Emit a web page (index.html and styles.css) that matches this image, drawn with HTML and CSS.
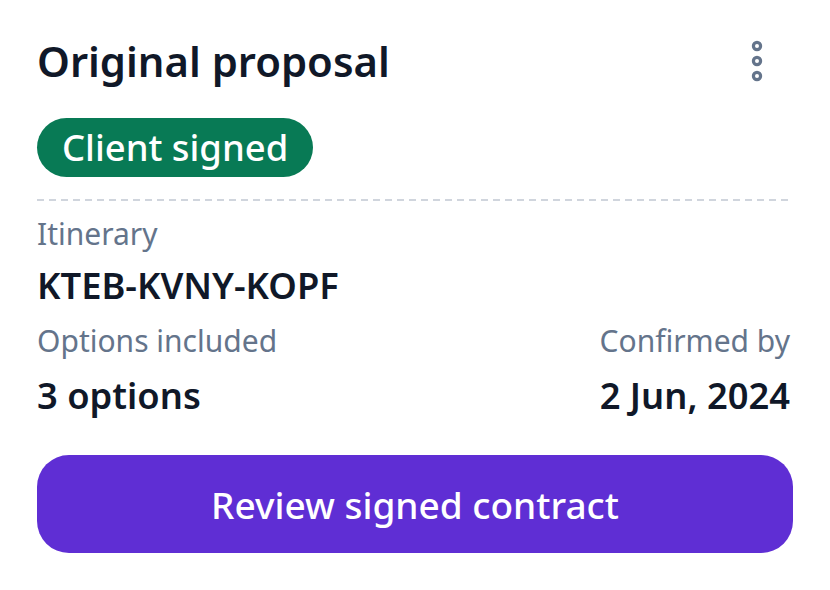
FILE: index.html
```html
<!DOCTYPE html>
<html lang="en">
<head>
    <meta charset="UTF-8">
    <title>Original proposal</title>
    <link rel="stylesheet" href="styles.css">
</head>
<body>
<div class="card">
    <div class="card-head">
        <h2 class="title">Original proposal</h2>
        <span class="more">
            <svg width="14" height="42" viewBox="0 0 14 42">
                <circle cx="7" cy="6" r="3.6" fill="#fff" stroke="#64748b" stroke-width="3.2"/>
                <circle cx="7" cy="21" r="3.6" fill="#fff" stroke="#64748b" stroke-width="3.2"/>
                <circle cx="7" cy="36" r="3.6" fill="#fff" stroke="#64748b" stroke-width="3.2"/>
            </svg>
        </span>
    </div>
    <span class="badge">Client signed</span>
    <div class="divider"></div>
    <p class="label">Itinerary</p>
    <p class="value">KTEB-KVNY-KOPF</p>
    <div class="row">
        <div>
            <p class="label">Options included</p>
            <p class="value">3 options</p>
        </div>
        <div class="right">
            <p class="label">Confirmed by</p>
            <p class="value">2 Jun, 2024</p>
        </div>
    </div>
    <button class="btn">Review signed contract</button>
</div>
</body>
</html>
```

FILE: styles.css
```css
* {
    padding: 0;
    margin: 0;
    box-sizing: border-box;
}

body {
    background: #fff;
    font-family: "Noto Sans", "Open Sans", sans-serif;
    color: #101828;
}

.card {
    padding: 30px 37px 0 37px;
}

.card-head {
    display: flex;
    justify-content: space-between;
    align-items: center;
}

.title {
    font-size: 41.8px;
    font-weight: 560;
    line-height: 62px;
}

.more {
    display: flex;
    margin-right: 29px;
}

.badge {
    display: inline-block;
    margin-top: 26px;
    height: 59px;
    line-height: 59px;
    padding: 0 25px;
    border-radius: 30px;
    background: #087a55;
    color: #fff;
    font-size: 36.4px;
    font-weight: 500;
}

.divider {
    height: 2px;
    margin-top: 22px;
    background: repeating-linear-gradient(to right, #d0d5dd 0 7px, transparent 7px 12px);
}

.label {
    margin-top: 13px;
    font-size: 30px;
    line-height: 40px;
    color: #64748b;
}

.value {
    margin-top: 10px;
    font-size: 36.3px;
    font-weight: 560;
    line-height: 42px;
}

.row {
    display: flex;
    justify-content: space-between;
}

.row .label {
    margin-top: 15px;
}

.row .value {
    margin-top: 13px;
}

.right {
    margin-right: 3px;
    text-align: right;
}

.btn {
    display: block;
    width: 100%;
    height: 98px;
    margin-top: 39px;
    border: none;
    border-radius: 32px;
    background: #5f2ed4;
    color: #fff;
    font-family: "Noto Sans", "Open Sans", sans-serif;
    font-size: 37px;
    font-weight: 500;
}
```
